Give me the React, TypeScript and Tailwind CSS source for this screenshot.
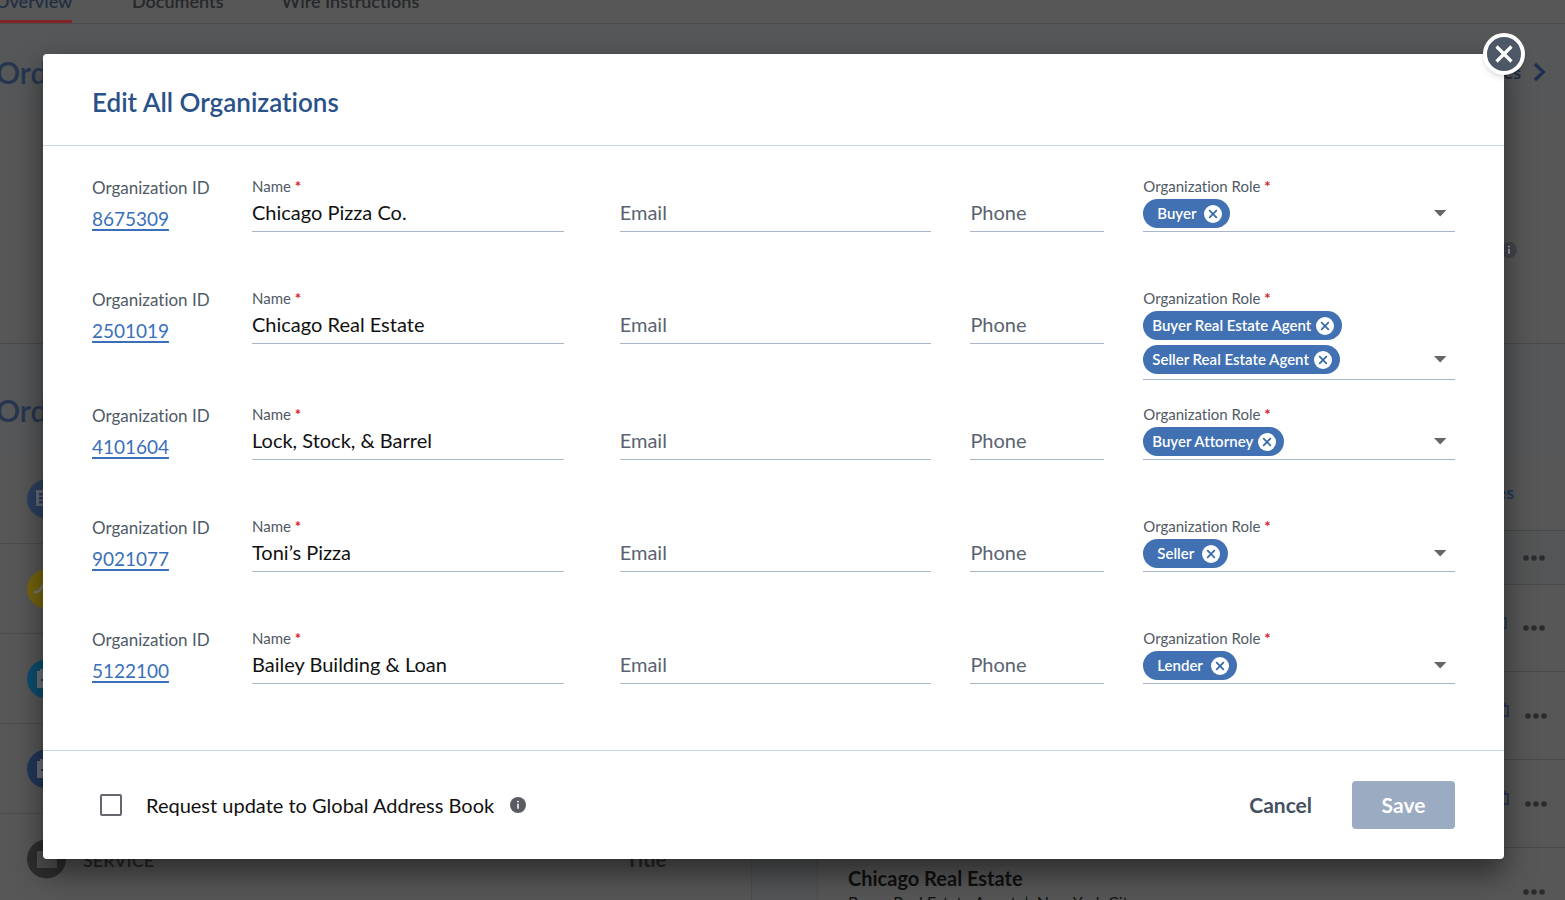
import { useState } from "react";

type Org = { id: string; name: string; roles: string[] };

const initialOrgs: Org[] = [
  { id: "8675309", name: "Chicago Pizza Co.", roles: ["Buyer"] },
  { id: "2501019", name: "Chicago Real Estate", roles: ["Buyer Real Estate Agent", "Seller Real Estate Agent"] },
  { id: "4101604", name: "Lock, Stock, & Barrel", roles: ["Buyer Attorney"] },
  { id: "9021077", name: "Toni’s Pizza", roles: ["Seller"] },
  { id: "5122100", name: "Bailey Building & Loan", roles: ["Lender"] },
];

function Required() {
  return <span className="font-bold text-[#d3222a]">*</span>;
}

function InfoIcon({ className }: { className: string }) {
  return (
    <svg viewBox="0 0 16 16" className={className} aria-hidden="true">
      <circle cx="8" cy="8" r="8" fill="currentColor" />
      <circle cx="8" cy="4.6" r="0.9" fill="white" />
      <path d="M8 6.8v5" stroke="white" strokeWidth="1.5" />
    </svg>
  );
}

function Chip({ label, onRemove }: { label: string; onRemove: () => void }) {
  const short = label.length < 8;
  return (
    <span
      className={`flex h-[29px] w-fit items-center rounded-full bg-[#4171b3] text-[15px] font-semibold text-white ${
        short ? "gap-2 pr-2 pl-[14px]" : "gap-[5px] pr-2 pl-[9px]"
      }`}
    >
      {label}
      <button type="button" aria-label={`Remove ${label}`} onClick={onRemove}>
        <svg viewBox="0 0 18 18" className="size-[18px]">
          <circle cx="9" cy="9" r="9" fill="white" />
          <path d="M5.2 5.2l7.6 7.6M12.8 5.2l-7.6 7.6" stroke="#3567aa" strokeWidth="1.7" />
        </svg>
      </button>
    </span>
  );
}

function OrgRow({ org }: { org: Org }) {
  const [roles, setRoles] = useState(org.roles);
  const line =
    "h-9 w-full border-b border-[#a9b5cb] bg-transparent pb-1 text-[20px] leading-6 outline-none placeholder:text-[#5a6470] placeholder:opacity-100";
  return (
    <div className="grid min-h-[112px] grid-cols-[160px_312fr_56px_312fr_39px_134fr_39px_312fr] items-start pb-[14px] text-[#505a66]">
      <div className="flex flex-col items-start pt-[10px]">
        <span className="text-[17px] leading-6">Organization ID</span>
        <a href={`#${org.id}`} className="mt-2 border-b-2 border-[#3a6fba] text-[19px] leading-[21px] text-[#3a6fba]">
          {org.id}
        </a>
      </div>
      <div>
        <label htmlFor={`name-${org.id}`} className="block pt-[10px] text-[15px] leading-5">
          Name <Required />
        </label>
        <input id={`name-${org.id}`} defaultValue={org.name} className={`${line} text-[#111]`} />
      </div>
      <div />
      <input aria-label="Email" placeholder="Email" className={`${line} mt-[30px]`} />
      <div />
      <input aria-label="Phone" placeholder="Phone" className={`${line} mt-[30px]`} />
      <div />
      <div>
        <span className="block pt-[10px] text-[15px] leading-5">
          Organization Role <Required />
        </span>
        <div className={`flex items-end justify-between border-b border-[#a9b5cb] pt-[3px] ${roles.length > 1 ? "pb-[5px]" : "pb-[3px]"}`}>
          <div className="flex min-h-[29px] flex-col gap-[5px]">
            {roles.map((role) => (
              <Chip key={role} label={role} onRemove={() => setRoles(roles.filter((r) => r !== role))} />
            ))}
          </div>
          <button type="button" aria-label="Choose organization role" className="mr-2 mb-[11px]">
            <svg viewBox="0 0 14 7" className="h-[7px] w-[14px]">
              <path d="M1 0h12.4L7.2 6.6z" fill="#666" />
            </svg>
          </button>
        </div>
      </div>
    </div>
  );
}

function Dots() {
  return (
    <button type="button" aria-label="More" className="flex">
      <svg viewBox="0 0 22 6" className="h-[6px] w-[22px]" fill="#2b2c2e">
        <circle cx="3" cy="3" r="2.8" />
        <circle cx="11" cy="3" r="2.8" />
        <circle cx="19" cy="3" r="2.8" />
      </svg>
    </button>
  );
}

function ServiceIcon({ kind }: { kind: string }) {
  return (
    <svg viewBox="0 0 40 40" className="size-10">
      <circle
        cx="20.5"
        cy="20"
        r="19.5"
        fill={kind === "list" ? "#2c4060" : kind === "trend" ? "#75640f" : kind === "cyan" ? "#0c4d70" : kind === "navy" ? "#223759" : "#2e2e2e"}
      />
      {kind === "list" && (
        <path d="M10 11h20v16H10zM13 14v2.4h14V14zM13 18v2.4h14V18zM13 22v2.4h14V22z" fill="#666d78" fillRule="evenodd" />
      )}
      {kind === "trend" && <path d="M8 23q5 1 7-4l3-3 6 5 8-8" fill="none" stroke="#777" strokeWidth="2.4" />}
      {(kind === "cyan" || kind === "navy") && (
        <path d="M11 12h3v-2h3v2h9v-2h3v2h3v17H11zM15 20v2h10v-2z" fill="#6c7077" fillRule="evenodd" />
      )}
      {kind === "folder" && <path d="M11 12h8l2 2h10v15H11z" fill="#505050" />}
    </svg>
  );
}

function ClipIcon() {
  return (
    <svg viewBox="0 0 14 14" className="mb-3 size-[14px]" fill="none" stroke="#1d3556" strokeWidth="1.4">
      <path d="M1 3h12v10H1zM4 3V1h6v2" />
    </svg>
  );
}

function PageBehind() {
  return (
    <div aria-hidden="true" className="min-h-screen bg-[#575757] text-[#26282b]">
      <nav className="flex h-6 items-start border-b border-[#4c4c4c] text-[18px] leading-none font-semibold">
        <a href="#overview" className="flex h-[23px] w-18 border-b-[3px] border-[#812628] text-[#222f43]">
          <span className="-mt-2 -ml-[5px]">Overview</span>
        </a>
        <a href="#documents" className="-mt-2 ml-15">Documents</a>
        <a href="#wire" className="-mt-2 ml-[58px]">Wire Instructions</a>
      </nav>
      <section className="h-[88px] bg-[#555758]">
        <div className="flex items-center justify-between pt-7 pr-[18px]">
          <h2 className="-ml-1 text-[30px] leading-10 font-semibold text-[#26364f]">Order</h2>
          <div className="flex items-center gap-3 text-[18px] font-semibold text-[#1c2a44]">
            Files
            <svg viewBox="0 0 14 20" className="h-5 w-[14px]" fill="none" stroke="#1f2f4e" strokeWidth="3.2">
              <path d="M2 2l8.4 8L2 18" />
            </svg>
          </div>
        </div>
      </section>
      <section className="flex h-[231px] items-start justify-end pt-[130px] pr-12">
        <InfoIcon className="size-4 text-[#333b49] opacity-60" />
      </section>
      <section className="h-[111px] border-t border-[#494a4b] bg-[#555758] pt-[46px]">
        <h2 className="-ml-1 text-[30px] leading-10 font-semibold text-[#26364f]">Order</h2>
      </section>
      <div className="flex">
        <div className="w-[751px]">
          {["list", "trend", "cyan", "navy", "folder"].map((kind) => (
            <div key={kind} className="flex h-[90px] items-center gap-[17px] border-b border-[#4a4c4f] pl-[26px]">
              <ServiceIcon kind={kind} />
              {kind === "folder" && (
                <>
                  <span className="w-[526px] pt-1 text-[18px] font-semibold">SERVICE</span>
                  <span className="text-[20px] font-bold">Title</span>
                </>
              )}
            </div>
          ))}
        </div>
        <div className="w-[67px] border-x border-[#4c4f52] bg-[#535556]" />
        <div className="flex-1">
          <div className="flex h-[77px] items-center justify-end border-b border-[#474849] pr-[51px] text-[18px] font-semibold text-[#223759]">
            Files
          </div>
          <div className="flex h-[54px] items-center justify-end border-b border-[#474849] bg-[#535556] pr-5">
            <Dots />
          </div>
          {[0, 1, 2].map((n) => (
            <div
              key={n}
              className={`flex items-center justify-end gap-4 border-b border-[#474849] ${n === 0 ? "h-[87px] pr-5" : "h-22 pr-[18px]"}`}
            >
              <ClipIcon />
              <Dots />
            </div>
          ))}
          <div className="flex h-22 items-center justify-between pr-5 pl-[30px] text-[#101010]">
            <div className="pb-1">
              <p className="text-[20px] leading-6 font-bold">Chicago Real Estate</p>
              <p className="text-[16px] leading-6">Buyer Real Estate Agent&nbsp; | &nbsp;New York City</p>
            </div>
            <Dots />
          </div>
        </div>
      </div>
    </div>
  );
}

export default function App() {
  return (
    <div className="relative h-screen overflow-hidden font-['Lato',sans-serif] [font-variant-ligatures:none]">
      <PageBehind />
      <div className="absolute inset-0 pt-[54px] pr-[61px] pl-[43px]">
        <div
          role="dialog"
          aria-modal="true"
          aria-labelledby="dialog-title"
          className="relative rounded-[4px] bg-white shadow-[0_14px_30px_rgba(0,0,0,0.5)]"
        >
          <button
            type="button"
            aria-label="Close"
            className="absolute -top-[21px] -right-[21px] flex size-[42px] items-center justify-center rounded-full border-4 border-white bg-[#4d5766] shadow-md"
          >
            <svg viewBox="0 0 18 18" className="size-[18px]" stroke="white" strokeWidth="3.2">
              <path d="M1.5 1.5l15 15M16.5 1.5l-15 15" />
            </svg>
          </button>
          <header className="flex h-[92px] items-center border-b border-[#cbd6e2] px-[49px] pt-1">
            <h1 id="dialog-title" className="text-[26px] leading-8 font-semibold text-[#2b5288]">
              Edit All Organizations
            </h1>
          </header>
          <form>
            <div className="px-[49px] pt-5 pb-5">
              {initialOrgs.map((org) => (
                <OrgRow key={org.id} org={org} />
              ))}
            </div>
            <footer className="flex h-[109px] items-center justify-between border-t border-[#cbd6e2] pr-[49px] pl-[57px]">
              <div className="flex items-center">
                <input
                  id="global"
                  type="checkbox"
                  className="size-[22px] appearance-none rounded-[2px] border-2 border-[#666670] checked:bg-[#4171b3]"
                />
                <label htmlFor="global" className="pl-6 text-[20px] text-[#111]">
                  Request update to Global Address Book
                </label>
                <InfoIcon className="ml-4 size-4 text-[#5a5c63]" />
              </div>
              <div className="flex items-center gap-10">
                <button type="button" className="text-[21px] font-bold text-[#465160]">
                  Cancel
                </button>
                <button type="submit" className="h-12 w-[103px] rounded-[4px] bg-[#9aabc2] text-[21px] font-bold text-white">
                  Save
                </button>
              </div>
            </footer>
          </form>
        </div>
      </div>
    </div>
  );
}
